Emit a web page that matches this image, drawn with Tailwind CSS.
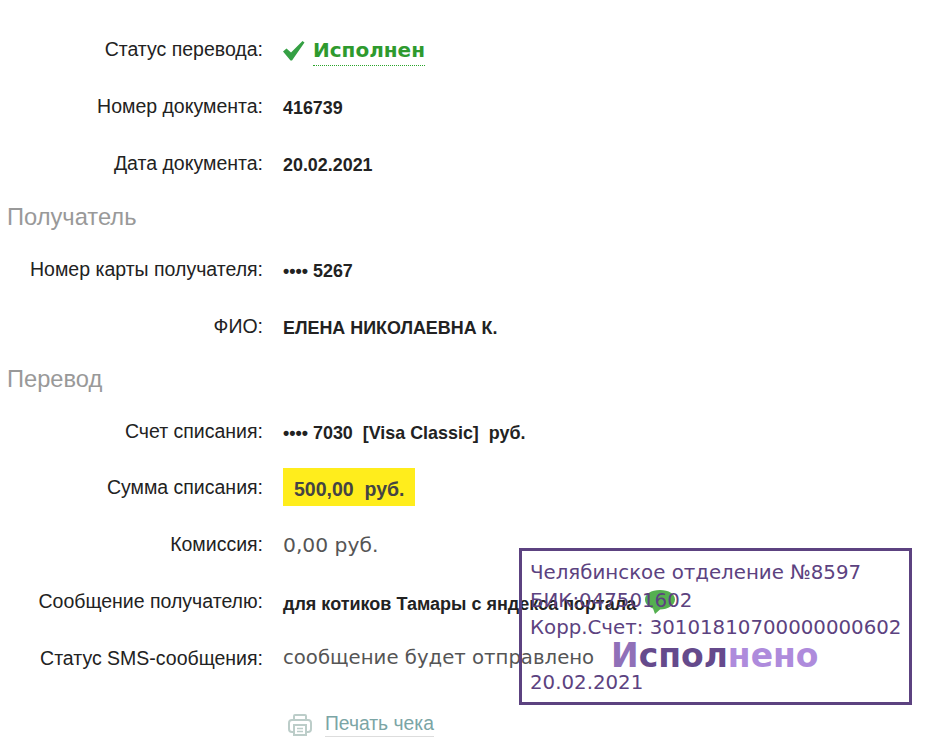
<!DOCTYPE html>
<html lang="ru">
<head>
  <meta charset="UTF-8" />
  <title>Статус перевода</title>
  <script src="https://cdn.jsdelivr.net/npm/@tailwindcss/browser@4"></script>
</head>
<body class="bg-white">
  <div class="relative w-[949px] h-[747px] overflow-hidden font-['Liberation_Sans',Arial,sans-serif] text-[19.5px] text-[#222]">
    <div class="pl-[7px] pt-[23px]">
      <div class="flex items-center h-[56px]">
        <div class="w-[256px] text-right mb-[2px]">Статус перевода:</div>
        <div class="ml-[20px] flex items-center">
          <svg width="22" height="22" viewBox="0 0 22 22"><path d="M0 11.5 L3.5 8.5 L8 12.5 L19.5 1 L21.5 2.5 L9 20.5 L7.5 20.5 Z" fill="#35a044"/></svg>
          <span class="ml-[8px] font-['DejaVu_Sans',sans-serif] font-bold text-[20px] text-[#2e9a2e] border-b border-dotted border-[#2aa52a] leading-[29px]">Исполнен</span>
        </div>
      </div>
      <div class="flex items-center h-[57px]">
        <div class="w-[256px] text-right mb-[2px]">Номер документа:</div>
        <div class="ml-[20px] font-bold text-[17.9px] mt-[2px]">416739</div>
      </div>
      <div class="flex items-center h-[57px]">
        <div class="w-[256px] text-right mb-[2px]">Дата документа:</div>
        <div class="ml-[20px] font-bold text-[17.9px] mt-[2px]">20.02.2021</div>
      </div>
      <div class="text-[23.7px] text-[#999] h-[25px] leading-[25px] mt-[12px]">Получатель</div>
      <div class="flex items-center h-[57px] mt-[12px]">
        <div class="w-[256px] text-right mb-[2px]">Номер карты получателя:</div>
        <div class="ml-[20px] font-bold text-[17.9px] mt-[2px]">•••• 5267</div>
      </div>
      <div class="flex items-center h-[57px]">
        <div class="w-[256px] text-right mb-[2px]">ФИО:</div>
        <div class="ml-[20px] font-bold text-[17.9px] mt-[2px]">ЕЛЕНА НИКОЛАЕВНА К.</div>
      </div>
      <div class="text-[23.7px] text-[#999] h-[25px] leading-[25px] mt-[11px]">Перевод</div>
      <div class="flex items-center h-[56.5px] mt-[12px]">
        <div class="w-[256px] text-right mb-[2px]">Счет списания:</div>
        <div class="ml-[20px] font-bold text-[17.9px] mt-[2px] whitespace-pre">•••• 7030  [Visa Classic]  руб.</div>
      </div>
      <div class="flex items-center h-[56.5px]">
        <div class="w-[256px] text-right mb-[2px]">Сумма списания:</div>
        <div class="ml-[20px] mb-[4px] font-bold text-[19.5px] whitespace-pre bg-[#ffed1c] h-[38px] leading-[42px] w-[132px] pl-[11px] text-[#444]">500,00  руб.</div>
      </div>
      <div class="flex items-center h-[56.5px]">
        <div class="w-[256px] text-right mb-[2px]">Комиссия:</div>
        <div class="ml-[20px] font-['DejaVu_Sans',sans-serif] text-[20.300px] text-[#555]">0,00 руб.</div>
      </div>
      <div class="flex items-center h-[56.5px]">
        <div class="w-[256px] text-right">Сообщение получателю:</div>
        <div class="ml-[20px] flex items-center">
          <span class="font-bold text-[18px] pt-[5px]">для котиков Тамары с яндекса портала</span>
          <svg class="ml-[8px]" width="32" height="26" viewBox="0 0 32 26"><path d="M16 1C7 1 1 5 1 10.5c0 4 3 7 8 9l2 5.500 5-4.500c8 0 15-4.500 15-10S25 1 16 1Z" fill="#55b050"/></svg>
        </div>
      </div>
      <div class="flex items-center h-[56.5px]">
        <div class="w-[256px] text-right">Статус SMS-сообщения:</div>
        <div class="ml-[20px] font-['DejaVu_Sans',sans-serif] text-[19.7px] text-[#555]">сообщение будет отправлено</div>
      </div>
      <div class="flex items-center h-[56px] ml-[281px] mt-[10px]">
        <svg width="24" height="22" viewBox="0 0 24 22" fill="none" stroke="#bccdc9" stroke-width="2"><path d="M6 6V2a1 1 0 0 1 1-1h10a1 1 0 0 1 1 1v4"/><rect x="1" y="6" width="22" height="12" rx="3"/><rect x="6" y="11" width="12" height="10" fill="#fff"/><path d="M9 14.500h6M9 17.500h6" stroke-width="1.300"/></svg>
        <span class="ml-[13px] text-[19.3px] text-[#7ba5a5] border-b border-[#ddd] leading-[24px]">Печать чека</span>
      </div>
    </div>

    <div class="absolute left-[519px] top-[548px] w-[393px] h-[157px] border-[3px] border-[#5c4280] pl-[8px] pt-[8px] font-['DejaVu_Sans',sans-serif] text-[19.8px] leading-[27.5px] text-[#5c4280]">
      <div>Челябинское отделение №8597</div>
      <div>БИК:047501602</div>
      <div>Корр.Счет: 30101810700000000602</div>
      <div class="h-[27px] pl-[81px] font-bold text-[33px] leading-[27px] text-[#ae8bdc]"><span class="text-[#9070b8]">И</span><span class="text-[#654a8c]">спол</span>нено</div>
      <div>20.02.2021</div>
    </div>
  </div>
</body>
</html>
